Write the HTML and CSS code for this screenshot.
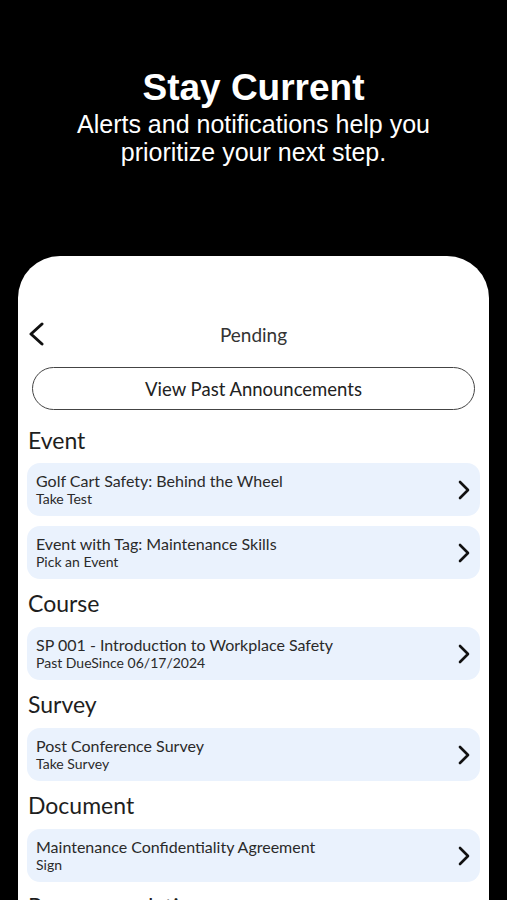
FILE: index.html
```html
<!DOCTYPE html>
<html lang="en">
<head>
    <meta charset="UTF-8">
    <meta name="viewport" content="width=device-width, initial-scale=1.0">
    <title>Stay Current</title>
    <link rel="stylesheet" href="styles.css">
</head>
<body>
    <header class="promo">
        <h1>Stay Current</h1>
        <p>Alerts and notifications help you<br>prioritize your next step.</p>
    </header>

    <main class="phone">
        <div class="topbar">
            <svg class="back" width="16" height="24" viewBox="0 0 16 24">
                <path d="M14 2 L3 12 L14 22" fill="none" stroke="#111" stroke-width="3" stroke-linecap="round" stroke-linejoin="round"/>
            </svg>
            <span class="topbar-title">Pending</span>
        </div>

        <button type="button" class="past-btn">View Past Announcements</button>

        <section class="group">
            <h2>Event</h2>
            <div class="item">
                <div class="item-text">
                    <div class="item-title">Golf Cart Safety: Behind the Wheel</div>
                    <div class="item-sub">Take Test</div>
                </div>
                <svg class="chev" width="12" height="20" viewBox="0 0 12 20"><path d="M2 2 L10 10 L2 18" fill="none" stroke="#111" stroke-width="2.6" stroke-linecap="round" stroke-linejoin="round"/></svg>
            </div>
            <div class="item">
                <div class="item-text">
                    <div class="item-title">Event with Tag: Maintenance Skills</div>
                    <div class="item-sub">Pick an Event</div>
                </div>
                <svg class="chev" width="12" height="20" viewBox="0 0 12 20"><path d="M2 2 L10 10 L2 18" fill="none" stroke="#111" stroke-width="2.6" stroke-linecap="round" stroke-linejoin="round"/></svg>
            </div>
        </section>

        <section class="group">
            <h2>Course</h2>
            <div class="item">
                <div class="item-text">
                    <div class="item-title">SP 001 - Introduction to Workplace Safety</div>
                    <div class="item-sub">Past DueSince 06/17/2024</div>
                </div>
                <svg class="chev" width="12" height="20" viewBox="0 0 12 20"><path d="M2 2 L10 10 L2 18" fill="none" stroke="#111" stroke-width="2.6" stroke-linecap="round" stroke-linejoin="round"/></svg>
            </div>
        </section>

        <section class="group">
            <h2>Survey</h2>
            <div class="item">
                <div class="item-text">
                    <div class="item-title">Post Conference Survey</div>
                    <div class="item-sub">Take Survey</div>
                </div>
                <svg class="chev" width="12" height="20" viewBox="0 0 12 20"><path d="M2 2 L10 10 L2 18" fill="none" stroke="#111" stroke-width="2.6" stroke-linecap="round" stroke-linejoin="round"/></svg>
            </div>
        </section>

        <section class="group">
            <h2>Document</h2>
            <div class="item">
                <div class="item-text">
                    <div class="item-title">Maintenance Confidentiality Agreement</div>
                    <div class="item-sub">Sign</div>
                </div>
                <svg class="chev" width="12" height="20" viewBox="0 0 12 20"><path d="M2 2 L10 10 L2 18" fill="none" stroke="#111" stroke-width="2.6" stroke-linecap="round" stroke-linejoin="round"/></svg>
            </div>
        </section>

        <section class="group">
            <h2>Recommendations</h2>
        </section>
    </main>
</body>
</html>
```

FILE: styles.css
```css
html, body {
    margin: 0;
    height: 100%;
    overflow: hidden;
}

body {
    background-color: #000;
    font-family: "Lato", "Open Sans", sans-serif;
}

.promo {
    padding-top: 66px;
    text-align: center;
    color: #fff;
    font-family: "Liberation Sans", Arial, sans-serif;
}

.promo h1 {
    margin: 0;
    font-size: 37px;
    line-height: 44px;
    font-weight: bold;
}

.promo p {
    margin: 0;
    font-size: 25px;
    line-height: 28px;
}

.phone {
    margin: 90px 18px 0;
    background-color: #fff;
    border-radius: 42px 42px 0 0;
    padding: 64px 9px 0;
    min-height: 700px;
}

.topbar {
    display: flex;
    align-items: center;
    justify-content: center;
    position: relative;
    height: 28px;
}

.back {
    position: absolute;
    left: 1px;
    top: 2px;
}

.topbar-title {
    font-size: 19px;
    color: #333;
}

.past-btn {
    display: block;
    width: calc(100% - 10px);
    margin: 19px 5px 0;
    height: 43px;
    border: 1.5px solid #444;
    border-radius: 22px;
    background-color: #fff;
    font-family: inherit;
    font-size: 18.5px;
    color: #222;
}

.group {
    display: flex;
    flex-direction: column;
    gap: 10px;
}

.group h2 {
    margin: 10px 0 0 1px;
    font-size: 23px;
    line-height: 28px;
    font-weight: normal;
    color: #1e1e1e;
}

.group:first-of-type h2 {
    margin: 16px 0 -1px 1px;
}

.item {
    display: flex;
    align-items: center;
    background-color: #eaf2fd;
    border-radius: 13px;
    padding: 9px 10px 9px 9px;
}

.item-text {
    flex: 1;
}

.item-title {
    font-size: 16px;
    line-height: 18px;
    color: #2a2a2a;
}

.item-sub {
    font-size: 14px;
    line-height: 17px;
    color: #2a2a2a;
}

.chev {
    flex-shrink: 0;
}
```
